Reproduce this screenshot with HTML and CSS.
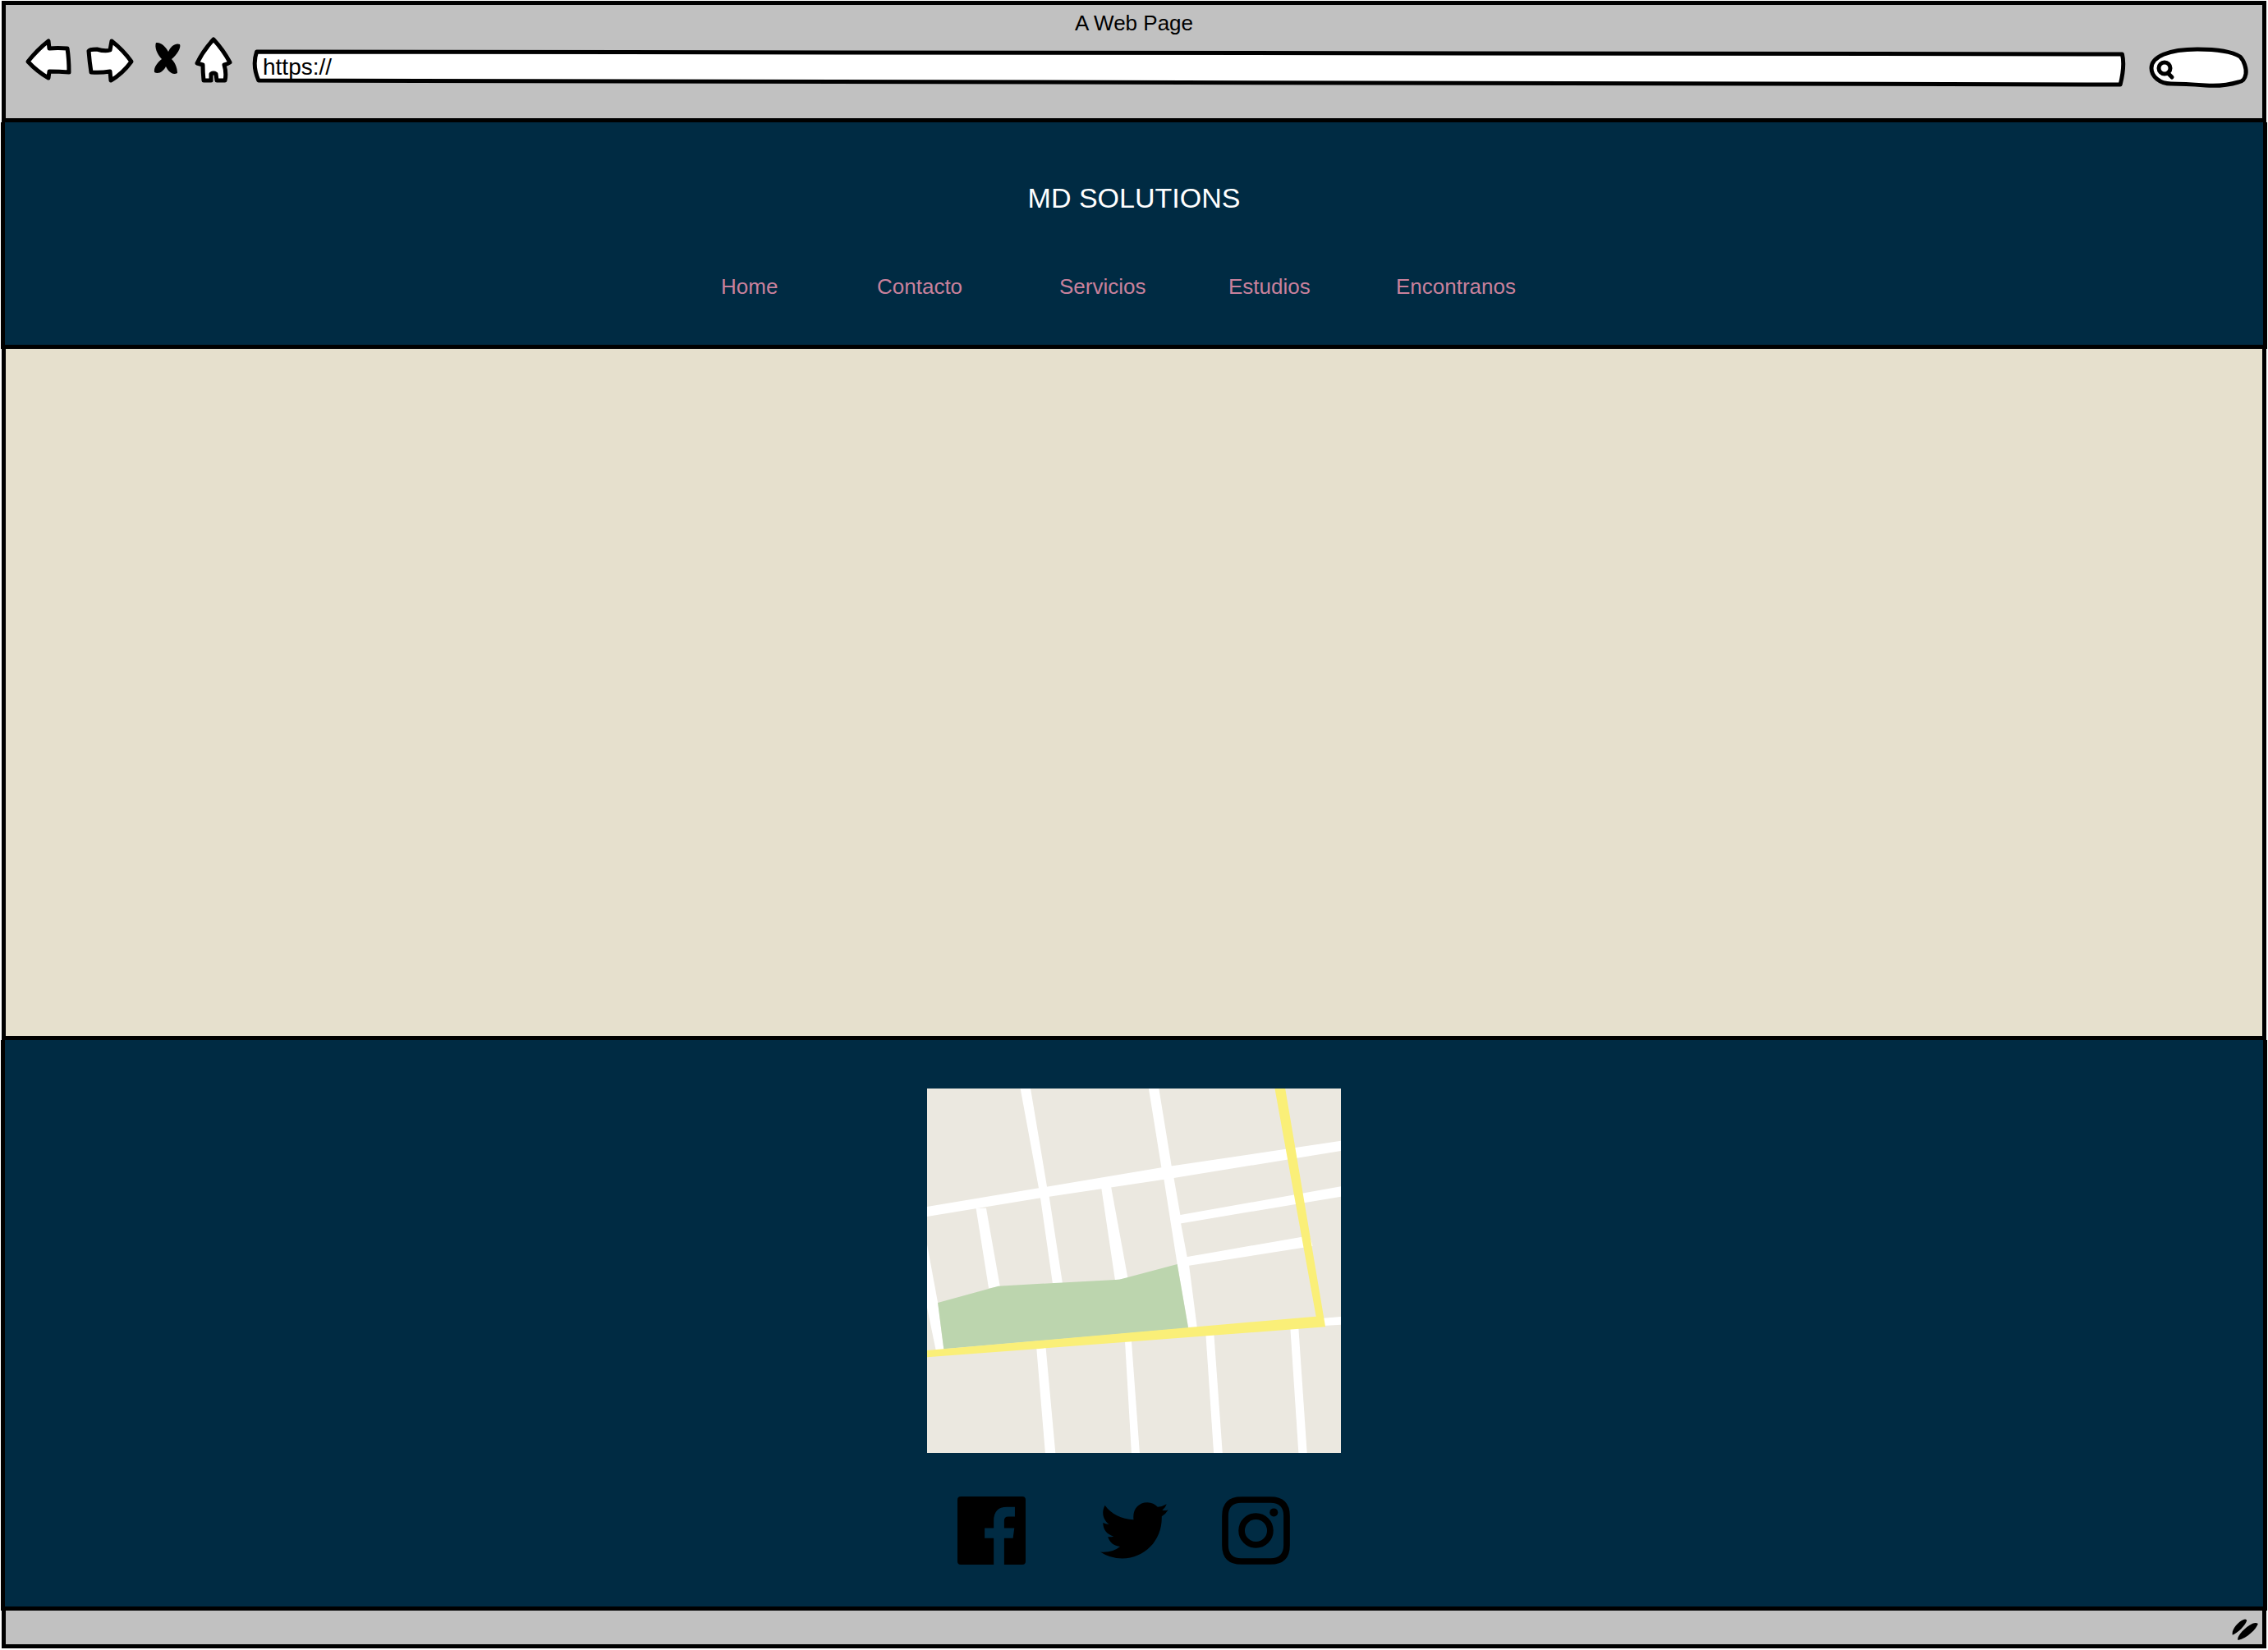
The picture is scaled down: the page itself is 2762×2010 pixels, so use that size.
FILE: index.html
```html
<!DOCTYPE html>
<html lang="es">
<head>
<meta charset="utf-8">
<meta name="viewport" content="width=device-width, initial-scale=1">
<title>MD Solutions</title>
<link rel="stylesheet" href="styles.css">
</head>
<body>
<div class="window">
  <div class="toolbar">
    <p class="window-title">A Web Page</p>
    <div class="controls">
      <button class="control" type="button" aria-label="Back">
        <svg class="sketch" width="60" height="64" viewBox="30 44 60 64"><path d="M34 75C42 65 50 57 59 50L60 59Q70 58 82 59Q84 72 84 88Q72 87 60 87L59 95Q45 87 34 75Z"/></svg>
      </button>
      <button class="control" type="button" aria-label="Forward">
        <svg class="sketch" width="60" height="64" viewBox="104 44 60 64"><path d="M108 62Q109 60 118 60Q128 63 134 61L136 50Q150 61 160 75Q149 90 135 98L134 87Q122 89 111 88Q109 75 108 62Z"/></svg>
      </button>
      <button class="control" type="button" aria-label="Stop">
        <svg width="44" height="64" viewBox="178 44 44 64"><path d="M190 52C196 51 202 57 205 63C208 56 214 52 219 54C221 58 215 67 209 72C214 77 216 84 216 89C210 92 205 87 202 81C199 87 193 91 188 88C187 82 192 76 197 72C191 66 188 57 190 52Z"/></svg>
      </button>
      <button class="control" type="button" aria-label="Home">
        <svg class="sketch" width="48" height="64" viewBox="236 44 48 64"><path d="M260 48Q272 61 280 76Q277 78 273 79Q276 89 274 98L264 98L263 90Q260 88 257 90L257 98L248 98Q247 88 247 79L240 77Q247 62 260 48Z"/></svg>
      </button>
      <label class="address">
        <svg class="sketch stretch" viewBox="0 0 100 64" preserveAspectRatio="none" aria-hidden="true"><path d="M.2 19L99.8 22Q99.95 36 99.7 59L.3 54Q-.05 36 .2 19Z"/></svg>
        <input class="address-input" type="text" value="https://" aria-label="Address">
      </label>
      <label class="search">
        <svg class="sketch" width="122" height="64" viewBox="2616 44 122 64" aria-hidden="true"><path d="M2643 102C2629 102 2619 93 2619 83C2619 69 2640 60 2675 60C2701 60 2719 64 2727 69C2732 74 2735 84 2734 90C2733 96 2731 99 2725 100C2715 103 2700 105 2685 104Q2658 102 2643 102Z"/><circle cx="2635" cy="83" r="7"/><path d="M2639 89L2644 94"/></svg>
        <input class="search-input" type="search" aria-label="Search">
      </label>
    </div>
  </div>

  <header class="site-header">
    <h1 class="brand">MD SOLUTIONS</h1>
    <nav class="nav">
      <a href="#home">Home</a>
      <a href="#contacto">Contacto</a>
      <a href="#servicios">Servicios</a>
      <a href="#estudios">Estudios</a>
      <a href="#encontranos">Encontranos</a>
    </nav>
  </header>

  <main class="content"></main>

  <footer class="site-footer">
    <svg class="map" viewBox="58 78 1464 1332" preserveAspectRatio="none" role="img" aria-label="Mapa">
      <path fill="#ebe8e0" d="M58 78H1522V1410H58Z"/>
      <g fill="#fff">
        <path d="M388 78H424L482 436L490 473L537 789H502L460 486L453 442Z"/>
        <path d="M842 78H878L923 362L931 405L954 541L956 572L978 694L985 726L1013 950H982L943 720L895 405L887 367Z"/>
        <path d="M58 510L453 442L887 367L1522 269V306L931 405L490 473L58 546Z"/>
        <path d="M231 515H267L316 802L276 808Z"/>
        <path d="M674 438H709L768 770L723 778Z"/>
        <path d="M950 541L1522 436V473L950 572Z"/>
        <path d="M975 694L1385 620H1412L1422 654L980 726Z"/>
        <path d="M58 648L96 860L117 1032L89 1034L58 878Z"/>
        <path d="M1460 917L1522 912V941L1460 945Z"/>
        <path d="M445 1025H478L512 1410H476Z"/>
        <path d="M758 1000H781L810 1410H781Z"/>
        <path d="M1044 978H1073L1103 1410H1072Z"/>
        <path d="M1343 955H1372L1402 1410H1372Z"/>
      </g>
      <path fill="#bcd5ae" d="M96 861L310 800L738 776L943 720L982 953L117 1030Z"/>
      <path fill="#faef78" d="M58 1035L1434 911L1288 78H1325L1467 949L58 1060Z"/>
    </svg>
    <div class="social">
      <a href="#facebook" aria-label="Facebook">
        <svg width="83" height="83" viewBox="78 70 248 248"><path d="M90 70H314Q326 70 326 82V306Q326 318 314 318H248V222H280L285 185H248V158Q248 143 263 143H287V108H258Q210 108 210 158V185H177V222H210V318H90Q78 318 78 306V82Q78 70 90 70Z"/></svg>
      </a>
      <a class="social-middle" href="#twitter" aria-label="Twitter">
        <svg width="83" height="83" viewBox="599 70 252 248"><path d="M616 101C638 132 678 153 722 154C717 118 738 90 773 90C789 90 801 97 811 107Q829 105 844 96Q840 110 828 119Q840 121 850 117Q841 132 826 142C829 228 765 297 680 297Q634 297 599 273Q643 277 672 253C650 252 633 238 627 217Q638 219 648 215C623 208 609 190 609 165Q618 170 631 171C609 155 602 126 616 101Z"/></svg>
      </a>
      <a href="#instagram" aria-label="Instagram">
        <svg width="83" height="83" viewBox="1044 70 248 248"><path fill="none" stroke="#000" stroke-width="23" d="M1115 82H1221Q1280 82 1280 141V247Q1280 306 1221 306H1115Q1056 306 1056 247V141Q1056 82 1115 82Z"/><circle cx="1168" cy="194" r="52" fill="none" stroke="#000" stroke-width="23"/><circle cx="1233" cy="128" r="15"/></svg>
      </a>
    </div>
  </footer>

  <div class="status-bar">
    <svg width="33" height="28" viewBox="357 122 98 84" aria-hidden="true"><path d="M359 184C354 166 376 137 401 127Q410 124 411 132C405 150 378 178 359 184ZM379 203C372 192 400 158 432 142Q445 137 452 143C446 162 414 195 379 203Z"/></svg>
  </div>
</div>
</body>
</html>
```
FILE: styles.css
```css
* {
  box-sizing: border-box;
}

body {
  margin: 0;
  background: #fff;
  color: #000;
  font-family: "Liberation Sans", Arial, sans-serif;
  font-size: 26px;
  line-height: 32px;
}

.window {
  display: flex;
  flex-direction: column;
  min-height: 100vh;
  padding: 1px 2px 2px;
}

.toolbar,
.status-bar {
  background: #c1c1c1;
  border: 5px solid #000;
}

.toolbar {
  height: 148px;
  padding-top: 6px;
}

.window-title {
  margin: 0;
  text-align: center;
}

.controls {
  display: flex;
  gap: 14px;
  padding: 0 16px 0 23px;
}

.control {
  padding: 0;
  border: 0;
  background: none;
}

svg {
  display: block;
}

.sketch {
  fill: #fff;
  stroke: #000;
  stroke-width: 5px;
  stroke-linejoin: round;
  stroke-linecap: round;
}

.stretch {
  position: absolute;
  inset: 0;
  width: 100%;
  height: 100%;
  overflow: visible;
}

.stretch path {
  vector-effect: non-scaling-stroke;
}

.address,
.search {
  position: relative;
}

.address {
  flex: 1;
  margin: 0 14px 0 10px;
}

.address-input,
.search-input {
  position: absolute;
  inset: 20px 12px 8px 12px;
  padding: 0;
  border: 0;
  outline: 0;
  background: none;
  color: inherit;
  font: inherit;
}

.address-input {
  width: 95%;
  font-size: 28px;
}

.search-input {
  left: 34px;
  width: 70px;
}

.site-header,
.site-footer {
  background: #002b43;
  border: solid #000;
  border-width: 0 5px 5px;
  margin: 0 -1px;
  display: flex;
  flex-direction: column;
  align-items: center;
}

.site-header {
  padding: 72px 0 55px;
}

.brand {
  margin: 0;
  color: #fff;
  font-size: 34px;
  font-weight: 400;
  line-height: 40px;
}

.nav {
  display: grid;
  grid-template-columns: 190px 222px 206px 204px 184px;
  margin-top: 72px;
}

.nav a {
  color: #c9819c;
  text-decoration: none;
}

.content {
  flex: 1;
  background: #e6e0cd;
  border: solid #000;
  border-width: 0 5px 5px;
}

.site-footer {
  padding: 59px 0 51px;
}

.map {
  width: 504px;
  height: 444px;
}

.social {
  display: flex;
  margin-top: 53px;
  padding-right: 26px;
}

.social-middle {
  margin: 0 65px 0 91px;
}

.status-bar {
  display: flex;
  align-items: center;
  justify-content: flex-end;
  height: 46px;
  padding: 4px 4px 0 0;
  border-top: 0;
}
```
